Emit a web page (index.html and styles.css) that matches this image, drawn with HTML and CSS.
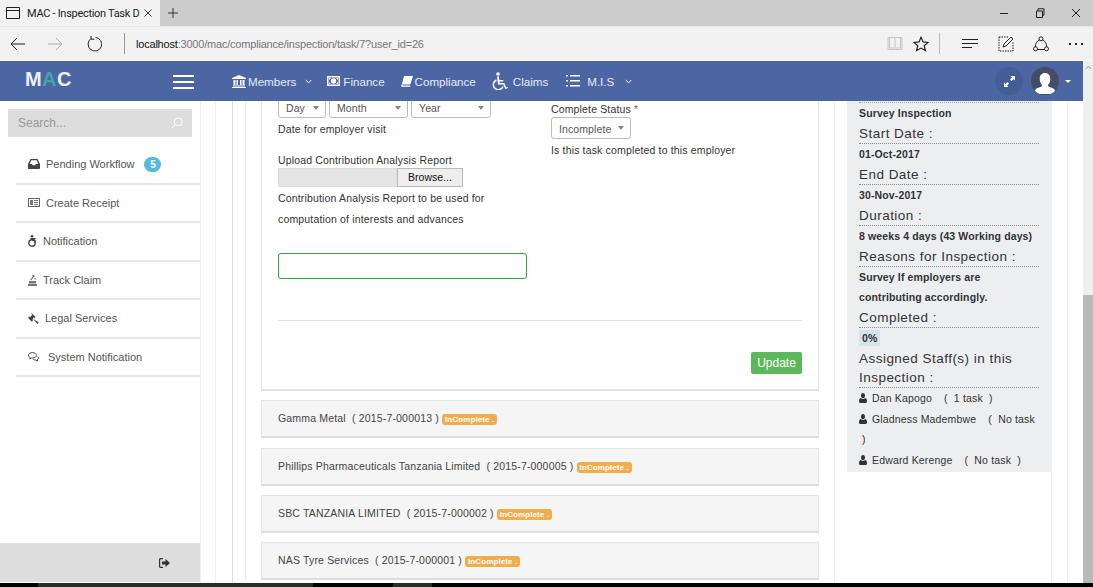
FILE: index.html
```html
<!DOCTYPE html>
<html>
<head>
<meta http-equiv="Content-Type" content="text/html; charset=utf-8"/>
<title>MAC - Inspection Task Details</title>
<link rel="stylesheet" href="styles.css">
</head>
<body>

<!-- browser frame -->
<div class="tabbar">
  <div class="tab">
    <svg class="tab-icon" width="14" height="12" viewBox="0 0 14 12"><path d="M.5.5h13v11H.5zM.5 3.500h13" fill="none" stroke="#222"/></svg>
    <span class="tab-title">MAC - Inspection Task D</span>
    <svg width="8" height="8" viewBox="0 0 8 8"><path d="M.5.5l7 7M7.500.5l-7 7" stroke="#333" fill="none"/></svg>
  </div>
  <svg class="tab-new" width="10" height="10" viewBox="0 0 10 10"><path d="M5 0v10M0 5h10" stroke="#333" fill="none"/></svg>
  <div class="win-btns">
    <svg width="10" height="10" viewBox="0 0 10 10"><path d="M1 5.500h8" stroke="#222" fill="none"/></svg>
    <svg width="10" height="10" viewBox="0 0 10 10"><path d="M1.500 3h6v6.500h-6zM3 3V.8h6v6.400H7.500" stroke="#222" fill="none"/></svg>
    <svg width="10" height="10" viewBox="0 0 10 10"><path d="M1 1l8 8M9 1l-8 8" stroke="#222" fill="none"/></svg>
  </div>
</div>
<div class="toolbar">
  <svg class="tool-back" width="16" height="14" viewBox="0 0 16 14"><path d="M15 7H1M7 1L1 7l6 6" stroke="#222" fill="none"/></svg>
  <svg class="tool-fwd" width="16" height="14" viewBox="0 0 16 14"><path d="M1 7h14M9 1l6 6-6 6" stroke="#aaa" fill="none"/></svg>
  <svg class="tool-reload" width="16" height="16" viewBox="0 0 16 16"><path d="M5 2.600A6.800 6.800 0 1 0 9.500 1.400M5 0v3.200h3.400" stroke="#222" fill="none"/></svg>
  <span class="tool-sep"></span>
  <span class="url"><b>localhost</b>:3000/mac/compliance/inspection/task/7?user_id=26</span>
  <div class="tool-right">
    <svg class="tr-book" width="16" height="15" viewBox="0 0 16 15"><path d="M1 1.500h6.500c.4 0 .5.200.5.500 0-.3.100-.5.500-.5H15v12H8.500L8 14l-.5-.5H1zM8 2v11.500M2.500 1.500v10.500h4.500M13.500 1.500v10.500H9" stroke="#c4c4c4" fill="none"/></svg>
    <svg class="tr-star" width="16" height="16" viewBox="0 0 16 16"><path d="M8 1.300l2 4.600 5 .5-3.800 3.300 1.200 4.900L8 12.100l-4.400 2.500 1.200-4.900L1 6.400l5-.5z" stroke="#222" stroke-width="1.200" fill="none"/></svg>
    <span class="tool-sep2"></span>
    <svg class="tr-hub" width="16" height="10" viewBox="0 0 16 10"><path d="M0 .5h16M0 4.500h16M0 8.500h10" stroke="#222" fill="none"/></svg>
    <svg class="tr-note" width="16" height="16" viewBox="0 0 16 16"><path d="M1 1h9M1 1v14h14V6" stroke="#222" stroke-dasharray="1.500 1" fill="none"/><path d="M5 11l1-3 7-7 2 2-7 7z" stroke="#222" fill="none"/></svg>
    <svg class="tr-share" width="16" height="16" viewBox="0 0 16 16"><circle cx="8" cy="2.800" r="2" stroke="#222" fill="none"/><circle cx="2.500" cy="12.800" r="2" stroke="#222" fill="none"/><circle cx="13.500" cy="12.800" r="2" stroke="#222" fill="none"/><path d="M6.300 3.800C3.800 5.200 2.500 7.600 2.300 10.800M9.700 3.800c2.500 1.400 3.800 3.800 4 7M4.500 13.500h7" stroke="#222" fill="none"/></svg>
    <svg class="tr-more" width="14" height="2" viewBox="0 0 14 2"><path d="M0 0h2v2H0zM6 0h2v2H6zM12 0h2v2h-2z" fill="#222"/></svg>
  </div>
</div>

<div class="app">
  <div class="app-main">

    <!-- app nav -->
    <div class="topnav">
      <div class="logo">M<span class="logo-a">A</span>C</div>
      <div class="burger"><span></span><span></span><span></span></div>
      <ul class="menu">
        <li class="m-members">
          <svg width="14" height="13" viewBox="0 0 14 13"><path d="M7 0l7 3v1H0V3zM1.500 5h2v5h-2zM4.500 5h1.500v5H4.500zM8 5h1.500v5H8zM10.500 5h2v5h-2zM1 10.500h12V11.500H1zM0 12h14v1H0z" fill="#fff"/></svg>
          <span>Members</span>
          <svg class="chev" width="7" height="5" viewBox="0 0 7 5"><path d="M.7 1l2.800 2.800L6.300 1" stroke="#fff" fill="none"/></svg>
        </li>
        <li class="m-finance">
          <svg width="13" height="10" viewBox="0 0 13 10"><path d="M0 0h13v10H0zM1.500 1.500v7h10v-7z" fill="#fff" fill-rule="evenodd"/><circle cx="6.500" cy="5" r="2.700" fill="#fff"/><path d="M2 2h2L2 4zM11 2H9l2 2zM2 8h2L2 6zM11 8H9l2-2z" fill="#fff"/></svg>
          <span>Finance</span>
        </li>
        <li class="m-compliance">
          <svg width="12" height="11" viewBox="0 0 12 11"><path d="M3 0h9L9.500 8H1zM1 8.500h8.200l-.2 1H2c-.5 0-.6.700 0 .7h7.500l-.2.800H1.500C.5 11 0 10 .3 9z" fill="#fff"/></svg>
          <span>Compliance</span>
        </li>
        <li class="m-claims">
          <svg width="16" height="18" viewBox="0 0 16 18"><circle cx="6" cy="2" r="1.800" fill="#fff"/><path d="M5 4.500h2l.3 3.500h4v1.500H7.500l.2 1.500h4.500l2 4.500 1.400-.6.500 1.100-2.800 1.100-2-4.500H6z" fill="#fff"/><path d="M4.500 8A5 5 0 1 0 11 14.500" stroke="#fff" stroke-width="1.500" fill="none"/></svg>
          <span>Claims</span>
        </li>
        <li class="m-mis">
          <svg width="14" height="12" viewBox="0 0 14 12"><path d="M0 0h2v1.500H0zM4 0h10v1.500H4zM0 5h2v1.500H0zM4 5h10v1.500H4zM0 10h2v1.500H0zM4 10h10v1.500H4z" fill="#fff"/></svg>
          <span>M.I.S</span>
          <svg class="chev" width="7" height="5" viewBox="0 0 7 5"><path d="M.7 1l2.800 2.800L6.300 1" stroke="#fff" fill="none"/></svg>
        </li>
      </ul>
      <div class="nav-right">
        <span class="expand"><svg width="11" height="11" viewBox="0 0 11 11"><path d="M6.500 0H11v4.500L9.500 3 7.500 5 6 3.500 8 1.500zM4.500 11H0V6.500L1.500 8l2-2L5 7.500l-2 2z" fill="#fff"/></svg></span>
        <span class="avatar"><svg width="20" height="23" viewBox="0 0 20 21"><path d="M10 0c3.400 0 5.300 2.600 5.300 5.900 0 2.500-1 4.700-2.400 6 .2 1.500 1.500 2 3 2.500 2.200.8 4 1.600 4.100 3.500V21H0v-3.100c.1-1.900 1.900-2.700 4.100-3.500 1.500-.5 2.800-1 3-2.500-1.400-1.300-2.400-3.500-2.400-6C4.700 2.600 6.600 0 10 0z" fill="#fff"/></svg></span>
        <span class="caret"></span>
      </div>
    </div>

    <div class="page">
      <div class="sidebar">
        <div class="search"><span>Search...</span>
          <svg width="12" height="12" viewBox="0 0 12 12"><circle cx="7.200" cy="4.800" r="3.900" stroke="#fff" fill="none"/><path d="M4.300 7.700L.8 11.200" stroke="#fff" fill="none"/></svg>
        </div>
        <ul class="side-menu">
          <li>
            <svg class="si" width="12" height="10" viewBox="0 0 12 10"><path d="M2.500 0h7L12 5v4c0 .6-.4 1-1 1H1c-.6 0-1-.4-1-1V5zM3.300 1.200L1.600 5H4l.7 1.300h2.600L8 5h2.400L8.700 1.200z" fill="#444" fill-rule="evenodd"/></svg>
            <span class="t1">Pending Workflow</span><span class="badge">5</span>
          </li>
          <li>
            <svg class="si" width="12" height="9" viewBox="0 0 12 9"><path d="M0 0h12v9H0zM1 1v7h10V1z" fill="#666" fill-rule="evenodd"/><path d="M2 2h3v5H2zM6 2h4v1H6zM6 4h4v1H6zM6 6h4v1H6z" fill="#777"/></svg>
            <span class="t1">Create Receipt</span>
          </li>
          <li>
            <svg class="si" width="9" height="12" viewBox="0 0 9 12"><circle cx="4" cy="1.300" r="1.300" fill="#444"/><path d="M2 3h6L6 5.500h2.500L7 8 6 7.300l.6-1L4.500 6" fill="#444"/><circle cx="4" cy="8" r="3.200" stroke="#444" stroke-width="1.400" fill="none"/></svg>
            <span class="t2">Notification</span>
          </li>
          <li>
            <svg class="si" width="9" height="12" viewBox="0 0 9 12"><path d="M0 10h9v2H0zM1 7h7v2.500H1zM2 6l3-4 1 1-2.500 3zM5 .5l2 1.500-1 1L4 1.500zM6.500 4l2 1-.5.800-2-1z" fill="#777"/></svg>
            <span class="t2">Track Claim</span>
          </li>
          <li>
            <svg class="si" width="11" height="11" viewBox="0 0 11 11"><path d="M3.500 0l4 4-1.200 1.200L5.600 4.500 4.700 5.400 10.800 9.600 9.400 11 5.200 6 4.300 6.800 5 7.500 3.800 8.700 0 4.800 1.200 3.600l.7.700L4.200 2 3.500 1.200z" fill="#444"/></svg>
            <span class="t3">Legal Services</span>
          </li>
          <li>
            <svg class="si" width="11" height="10" viewBox="0 0 11 10"><path d="M4.500.6C2.200.6.500 1.800.500 3.400c0 1 .7 1.800 1.700 2.300l-.5 1.200 1.700-.9h1.100c2.300 0 4-1.200 4-2.600S6.800.6 4.500.6z" stroke="#444" fill="none"/><path d="M9.800 4.500c.6.500.8 1.200.6 1.800-.2.700-.7 1.100-1.300 1.400l.4 1.300-1.900-1c-1 0-1.800-.2-2.400-.7" stroke="#444" fill="none"/></svg>
            <span class="t4">System Notification</span>
          </li>
        </ul>
        <div class="side-foot">
          <svg width="11" height="10" viewBox="0 0 11 10"><path d="M4 0H1.500C.7 0 0 .7 0 1.500v7C0 9.300.7 10 1.500 10H4V8.800H1.800c-.4 0-.6-.2-.6-.6V1.800c0-.4.2-.6.600-.6H4zM3 3.500h3.500V1L11 5 6.500 9V6.500H3z" fill="#333"/></svg>
        </div>
      </div>

      <div class="rule-a"></div>
      <div class="rule-b"></div>

      <div class="content">
        <div class="content-in">
          <div class="form-panel">
            <div class="form-cols">
              <div class="col-left">
                <div class="date-row">
                  <span class="sel sel-day">Day</span>
                  <span class="sel sel-month">Month</span>
                  <span class="sel sel-year">Year</span>
                </div>
                <p class="hint hint-date">Date for employer visit</p>
                <label class="lbl lbl-upload">Upload Contribution Analysis Report</label>
                <div class="file"><span class="file-box"></span><span class="file-btn">Browse...</span></div>
                <p class="hint hint-report">Contribution Analysis Report to be used for computation of interests and advances</p>
                <div class="green-input"></div>
              </div>
              <div class="col-right">
                <label class="lbl">Complete Status <span class="req">*</span></label>
                <span class="sel sel-status">Incomplete</span>
                <p class="hint hint-status">Is this task completed to this employer</p>
              </div>
            </div>
            <hr class="form-hr">
            <div class="form-foot"><span class="btn-update">Update</span></div>
          </div>

          <div class="acc">Gamma Metal &nbsp;( 2015-7-000013 ) <span class="tag">InComplete .</span></div>
          <div class="acc">Phillips Pharmaceuticals Tanzania Limited &nbsp;( 2015-7-000005 ) <span class="tag">InComplete .</span></div>
          <div class="acc">SBC TANZANIA LIMITED &nbsp;( 2015-7-000002 ) <span class="tag">InComplete .</span></div>
          <div class="acc">NAS Tyre Services &nbsp;( 2015-7-000001 ) <span class="tag">InComplete .</span></div>
        </div>
      </div>

      <div class="rule-c"></div>

      <div class="info">
        <div class="info-card">
          <div class="i-val i-first">Survey Inspection</div>
          <div class="i-head">Start Date :</div>
          <div class="i-val">01-Oct-2017</div>
          <div class="i-head">End Date :</div>
          <div class="i-val">30-Nov-2017</div>
          <div class="i-head">Duration :</div>
          <div class="i-val">8 weeks 4 days (43 Working days)</div>
          <div class="i-head">Reasons for Inspection :</div>
          <div class="i-val">Survey If employers are contributing accordingly.</div>
          <div class="i-head">Completed :</div>
          <div class="i-val"><span class="pct">0%</span></div>
          <div class="i-head">Assigned Staff(s) in this Inspection :</div>
          <div class="staff"><svg width="8" height="10" viewBox="0 0 10 11" preserveAspectRatio="none"><path d="M5 0c1.600 0 2.500 1.100 2.500 2.800S6.600 5.800 5 5.800 2.500 4.500 2.500 2.800 3.400 0 5 0zM2.300 5.500C3 6.200 4 6.600 5 6.600s2-.4 2.700-1.100C9.200 5.600 10 7 10 9c0 1.200-.7 2-1.800 2H1.800C.7 11 0 10.200 0 9c0-2 .8-3.400 2.300-3.500z" fill="#333"/></svg><span class="s-name">Dan Kapogo</span> <span class="s-task">( &nbsp;1 task &nbsp;)</span></div>
          <div class="staff"><svg width="8" height="10" viewBox="0 0 10 11" preserveAspectRatio="none"><path d="M5 0c1.600 0 2.500 1.100 2.500 2.800S6.600 5.800 5 5.800 2.500 4.500 2.500 2.800 3.400 0 5 0zM2.300 5.500C3 6.200 4 6.600 5 6.600s2-.4 2.700-1.100C9.200 5.600 10 7 10 9c0 1.200-.7 2-1.800 2H1.800C.7 11 0 10.200 0 9c0-2 .8-3.400 2.300-3.500z" fill="#333"/></svg><span class="s-name">Gladness Madembwe</span> <span class="s-task">( &nbsp;No task &nbsp;)</span></div>
          <div class="staff"><svg width="8" height="10" viewBox="0 0 10 11" preserveAspectRatio="none"><path d="M5 0c1.600 0 2.500 1.100 2.500 2.800S6.600 5.800 5 5.800 2.500 4.500 2.500 2.800 3.400 0 5 0zM2.300 5.500C3 6.200 4 6.600 5 6.600s2-.4 2.700-1.100C9.200 5.600 10 7 10 9c0 1.200-.7 2-1.800 2H1.800C.7 11 0 10.200 0 9c0-2 .8-3.400 2.300-3.500z" fill="#333"/></svg><span class="s-name">Edward Kerenge</span> <span class="s-task">( &nbsp;No task &nbsp;)</span></div>
        </div>
      </div>

      <div class="rule-d"></div>
    </div>
  </div>

  <div class="scrollbar">
    <svg class="sb-up" width="7" height="5" viewBox="0 0 7 5"><path d="M.7 4l2.800-2.800L6.300 4" stroke="#999" fill="none"/></svg>
    <span class="sb-thumb"></span>
  </div>
</div>

<div class="taskbar"><span class="tb-a"></span><span class="tb-b"></span><span class="tb-c"></span><span class="tb-d"></span></div>

</body>
</html>
```

FILE: styles.css
```css
* {
  box-sizing: border-box;
}

html, body {
  margin: 0;
  height: 587px;
  overflow: hidden;
}

body {
  font-family: "Liberation Sans", Arial, sans-serif;
  font-size: 12px;
  color: #333;
  background: #fff;
  display: flex;
  flex-direction: column;
}

/* browser frame */
.tabbar {
  height: 26px;
  flex: none;
  background: #ccc;
  display: flex;
  align-items: center;
}

.tab {
  width: 160px;
  height: 26px;
  background: #f2f2f2;
  display: flex;
  align-items: center;
  padding-left: 6px;
}

.tab-title {
  width: 110px;
  margin-left: 7px;
  margin-right: 7px;
  white-space: nowrap;
  font-family: Roboto, sans-serif;
  font-size: 11px;
  letter-spacing: -0.3px;
  color: #222;
}

.tab-new {
  margin-left: 8px;
}

.win-btns {
  margin-left: auto;
  display: flex;
  gap: 26px;
  padding-right: 12px;
}

.toolbar {
  height: 35px;
  flex: none;
  background: #f2f2f2;
  display: flex;
  align-items: center;
  padding-left: 10px;
  border-top: 1px solid #e6e6e6;
  border-bottom: 1px solid #fafafa;
}

.tool-fwd {
  margin-left: 21px;
}

.tool-reload {
  margin-left: 23px;
}

.tool-sep {
  width: 1px;
  height: 21px;
  background: #999;
  margin-left: 22px;
  margin-right: 11px;
}

.url {
  font-size: 11px;
  color: #777;
  letter-spacing: -0.2px;
}

.url b {
  font-weight: normal;
  color: #111;
}

.tool-right {
  margin-left: auto;
  display: flex;
  align-items: center;
  padding-right: 10px;
}

.tool-sep2 {
  width: 1px;
  height: 21px;
  background: #bbb;
  margin: 0 22px 0 10px;
}

.tr-star {
  margin-left: 10px;
}

.tr-note {
  margin-left: 20px;
}

.tr-share {
  margin-left: 19px;
}

.tr-more {
  margin-left: 20px;
}

.app {
  flex: 1;
  min-height: 0;
  display: flex;
}

.app-main {
  width: 1083px;
  flex: none;
  display: flex;
  flex-direction: column;
}

/* app nav */
.topnav {
  height: 40px;
  flex: none;
  background: #4c66a4;
  display: flex;
  align-items: center;
  color: #fff;
  padding-right: 12px;
}

.logo {
  width: 56px;
  margin-left: 25px;
  font-size: 20px;
  font-weight: bold;
  letter-spacing: 0.4px;
  color: #eef1f8;
  margin-top: -3px;
}

.logo-a {
  color: #3fa7a9;
}

.burger {
  margin-left: 92px;
  width: 21px;
  display: flex;
  flex-direction: column;
  gap: 4px;
  margin-top: 1px;
}

.burger span {
  height: 2px;
  background: #fff;
}

.menu {
  list-style: none;
  margin: 0;
  padding: 0;
  display: flex;
  align-items: center;
  font-size: 11.600px;
  color: #e6eaf4;
}

.menu li {
  display: flex;
  align-items: center;
}

.menu li svg {
  flex: none;
}

.m-members {
  margin-left: 38px;
  gap: 2px;
}

.m-members .chev {
  margin-left: 7px;
}

.m-finance {
  margin-left: 15px;
  gap: 3px;
}

.m-compliance {
  margin-left: 16px;
  gap: 2px;
}

.m-claims {
  margin-left: 16px;
  gap: 5px;
}

.m-mis {
  margin-left: 18px;
  gap: 7px;
}

.m-mis .chev {
  margin-left: 4px;
}

.nav-right {
  margin-left: auto;
  display: flex;
  align-items: center;
}

.expand {
  width: 28px;
  height: 28px;
  border-radius: 50%;
  background: #455d96;
  display: flex;
  align-items: center;
  justify-content: center;
}

.avatar {
  width: 28px;
  height: 28px;
  border-radius: 50%;
  background: #434d66;
  margin-left: 8px;
  display: flex;
  align-items: flex-end;
  justify-content: center;
  overflow: hidden;
}

.caret {
  margin-left: 6px;
  border-left: 3px solid transparent;
  border-right: 3px solid transparent;
  border-top: 3px solid #fff;
}

/* page */
.page {
  flex: 1;
  min-height: 0;
  display: flex;
  overflow: hidden;
}

.sidebar {
  width: 200px;
  flex: none;
  display: flex;
  flex-direction: column;
}

.search {
  margin: 8px 8px 0;
  height: 28px;
  flex: none;
  background: #ddd;
  display: flex;
  align-items: center;
  justify-content: space-between;
  padding: 0 9px 0 10px;
  color: #999;
}

.side-menu {
  list-style: none;
  margin: 9px 0 0 16px;
  padding: 0;
  flex: 1;
  color: #555;
}

.side-menu li {
  height: 38.500px;
  display: flex;
  align-items: center;
  padding-left: 12px;
  border-bottom: 2px solid #e6e6ec;
  font-size: 11px;
}

.si {
  flex: none;
}

.t1, .t2, .t3 {
  margin-left: 6px;
}

.t4 {
  margin-left: 9px;
}

.badge {
  margin-left: 10px;
  width: 17px;
  height: 15px;
  border-radius: 8px;
  background: #54b9dc;
  color: #fff;
  font-size: 10px;
  font-weight: bold;
  text-align: center;
  line-height: 15px;
}

.side-foot {
  height: 39px;
  margin-bottom: 1px;
  flex: none;
  background: #ddd;
  display: flex;
  align-items: center;
  padding-left: 159px;
}

.rule-a {
  width: 16px;
  flex: none;
  border-left: 1px solid #eee;
  border-right: 1px solid #eee;
}

.rule-b {
  width: 17px;
  flex: none;
  border-right: 1px solid #ddd;
}

.content {
  width: 601px;
  flex: none;
  padding-left: 12px;
}

.content-in {
  height: 100%;
  border-left: 1px solid #e6e6e6;
  padding-left: 15px;
}

.rule-c {
  width: 13px;
  flex: none;
  border-left: 1px solid #eee;
}

/* form */
.form-panel {
  margin-top: -3px;
  width: 558px;
  height: 293px;
  border: 1px solid #e4e4e4;
  border-bottom-width: 2px;
  border-top: 0;
  padding: 0 16px;
}

.form-cols {
  display: flex;
}

.col-left {
  width: 273px;
  flex: none;
}

.date-row {
  display: flex;
  gap: 3px;
}

.sel {
  height: 20px;
  border: 1px solid #bbb;
  border-radius: 3px;
  color: #555;
  padding-left: 7px;
  line-height: 19px;
  display: block;
  position: relative;
  font-size: 10.500px;
  letter-spacing: 0.1px;
}

.sel::after {
  content: "";
  position: absolute;
  right: 6px;
  top: 7px;
  border-left: 3px solid transparent;
  border-right: 3px solid transparent;
  border-top: 4px solid #888;
}

.sel-day {
  width: 48px;
}

.sel-month {
  width: 79px;
}

.sel-year {
  width: 80px;
}

.sel-status {
  width: 80px;
  height: 22px;
  line-height: 22px;
}

.sel-status::after {
  top: 8px;
}

.hint {
  margin: 0;
  line-height: 21px;
  letter-spacing: 0.16px;
  font-size: 10.500px;
}

.hint-date {
  margin-top: 1px;
}

.hint-status {
  margin-top: 1px;
}

.lbl {
  display: block;
  line-height: 16px;
  font-size: 10.500px;
  letter-spacing: 0.15px;
}

.lbl-upload {
  margin-top: 12px;
}

.req {
  color: #d33;
}

.file {
  display: flex;
  height: 19px;
  width: 185px;
}

.file-box {
  width: 119px;
  background: #e4e4e4;
  border: 1px solid #ddd;
}

.file-btn {
  width: 66px;
  background: #eee;
  border: 1px solid #bbb;
  color: #111;
  text-align: center;
  line-height: 17px;
  font-size: 10.500px;
}

.hint-report {
  margin-top: 1px;
  width: 225px;
}

.green-input {
  margin-top: 23px;
  width: 249px;
  height: 26px;
  border: 1px solid #2bab35;
  border-radius: 3px;
}

.col-right {
  padding-top: 3px;
}

.form-hr {
  margin: 41px 0 0;
  border: 0;
  border-top: 1px solid #e4e4e4;
}

.form-foot {
  display: flex;
  justify-content: flex-end;
  margin-top: 31px;
}

.btn-update {
  width: 51px;
  height: 22px;
  background: #5cb85c;
  border-radius: 2px;
  color: #fff;
  text-align: center;
  line-height: 22px;
}

.acc {
  width: 558px;
  height: 38px;
  margin-top: 9.330px;
  background: #f5f5f5;
  border: 1px solid #e4e4e4;
  border-bottom: 2px solid #ddd;
  padding-left: 16px;
  line-height: 35px;
  font-size: 10.500px;
  letter-spacing: 0.17px;
  color: #444;
  white-space: nowrap;
}

.tag {
  display: inline-block;
  height: 11px;
  padding: 0 3px;
  line-height: 11px;
  background: #f0ad4e;
  color: #fff;
  border-radius: 3px;
  font-size: 8px;
  font-weight: bold;
  letter-spacing: 0.1px;
  vertical-align: 0;
}

/* right info card */
.info {
  width: 205px;
  flex: none;
  border-right: 1px solid #eee;
}

.info-card {
  width: 204px;
  background: #eceef0;
  padding: 0 12px;
  height: 371px;
  overflow: hidden;
  font-size: 10.500px;
  color: #333;
}

.i-head {
  font-size: 13.500px;
  letter-spacing: 0.47px;
  line-height: 19px;
  border-bottom: 1px dotted #888;
  margin-top: 0.500px;
}

.i-val {
  font-weight: bold;
  line-height: 20.400px;
  letter-spacing: 0.13px;
}

.i-first {
  margin-top: 1px;
  border-top: 1px dotted #aaa;
}

.pct {
  display: inline-block;
  background: #d5e3ec;
  padding: 0 3px;
  line-height: 16px;
  vertical-align: 0;
}

.staff {
  line-height: 20.700px;
  letter-spacing: 0.16px;
}

.staff svg {
  margin-right: 5px;
  vertical-align: -1px;
}

.s-task {
  margin-left: 9px;
}

.rule-d {
  width: 16px;
  flex: none;
  border-right: 1px solid #eee;
}

.scrollbar {
  width: 10px;
  flex: none;
  background: #efefef;
  display: flex;
  flex-direction: column;
  align-items: center;
}

.sb-up {
  margin-top: 4px;
  flex: none;
}

.sb-thumb {
  align-self: stretch;
  margin-top: 225px;
  flex: 1;
  background: #b9b9b9;
}

.taskbar {
  height: 4px;
  flex: none;
  background: #000;
  display: flex;
}

.tb-a {
  width: 38px;
}

.tb-b {
  width: 275px;
  background: #2b2b2b;
}

.tb-c {
  width: 80px;
}

.tb-d {
  width: 39px;
  background: #2b2b2b;
}
```
